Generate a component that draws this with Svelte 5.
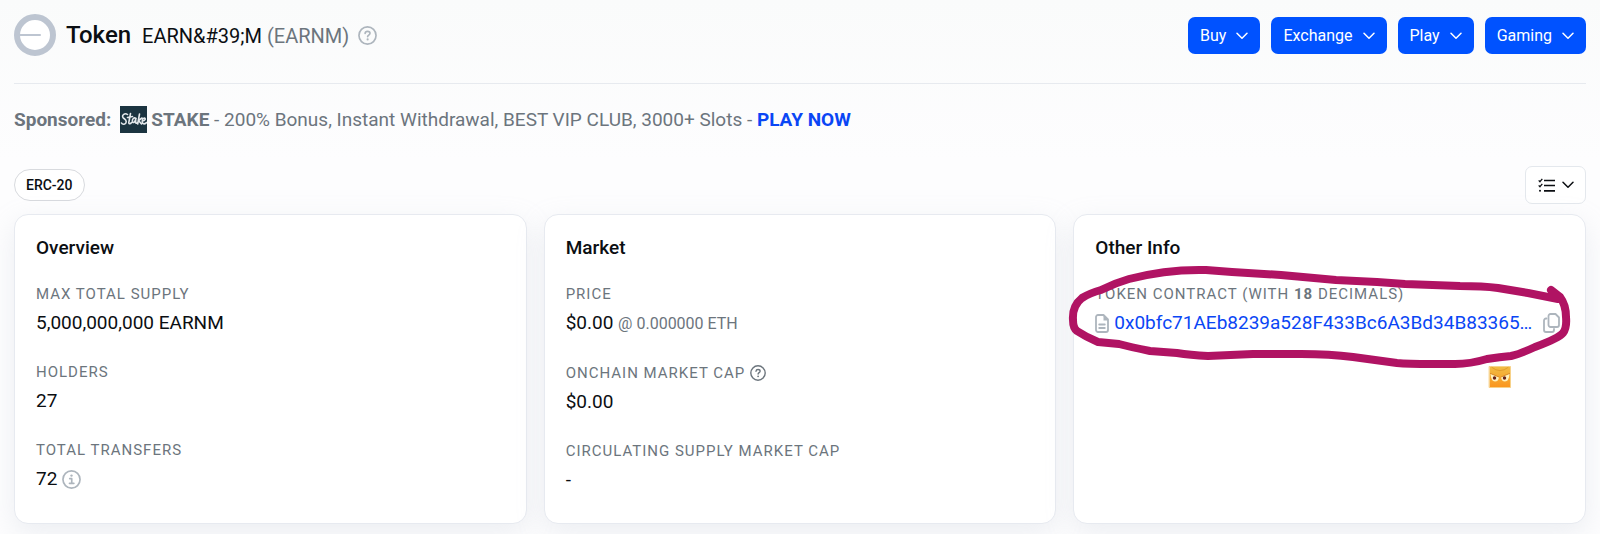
<script>
  const menus = ['Buy', 'Exchange', 'Play', 'Gaming'];
</script>

{#snippet chevron()}
  <svg class="chevron" viewBox="0 0 12 8" aria-hidden="true"><path d="M1 1.2 6 6.2 11 1.2" /></svg>
{/snippet}

{#snippet question()}
  <svg class="ring" viewBox="0 0 16 16" aria-hidden="true">
    <circle cx="8" cy="8" r="7.2" />
    <path d="M6 6.2c.1-1.1.9-1.7 2-1.7 1.2 0 2.1.7 2.1 1.7 0 1.4-2 1.5-2 2.8" />
    <circle class="dot" cx="8.1" cy="11.3" r=".9" />
  </svg>
{/snippet}

<main>
  <header>
    <svg class="logo" viewBox="0 0 42 42" aria-hidden="true">
      <circle cx="21" cy="21" r="18" />
      <path d="M5 21H26" />
    </svg>
    <h1>Token <span class="name">EARN&amp;#39;M <span class="muted">(EARNM)</span></span></h1>
    <span class="help">{@render question()}</span>
    <nav>
      {#each menus as menu}
        <button class="menu">{menu}{@render chevron()}</button>
      {/each}
    </nav>
  </header>

  <p class="sponsor">
    <b>Sponsored:</b>
    <svg class="stake" viewBox="0 0 27 27" aria-hidden="true">
      <rect width="27" height="27" />
      <path d="M7.500 8.500C5 6.500 1.500 9 3 11.500c1 1.500 3.500 1.800 3.200 4.500-.3 2.500-3.700 3-4.700 1M10.500 7.500 8.800 16.500c0 2 1.700 1.500 2.700 0M7.500 11.500l5-1M16 12.500c-2-1.500-4 .5-3.500 3 .5 2 2.500 1 3.300-2.500-.3 3-.3 5 1.200 4M19.500 8l-1.800 10M22 12l-3.500 2.500 3 3.500M22.500 15c2.500 0 3.500-2.500 2-3-2-.3-3 4-1.500 5.500 1 .8 2.500 0 3.500-1" />
    </svg>
    <span><b>STAKE</b> - 200% Bonus, Instant Withdrawal, BEST VIP CLUB, 3000+ Slots - <a href="#play"><b>PLAY NOW</b></a></span>
  </p>

  <div class="tools">
    <a class="pill" href="#erc20">ERC-20</a>
    <button class="list" aria-label="View options">
      <svg class="checks" viewBox="0 0 17 15" aria-hidden="true">
        <path d="M6 2.500h11M6 7.500h11M6 12.800h11" />
        <path class="thin" d="M.7 2.400 2 3.700 4.300.9M.7 7.400 2 8.700 4.300 5.900" />
        <circle cx="2" cy="12.800" r="1" />
      </svg>
      {@render chevron()}
    </button>
  </div>

  <div class="cards">
    <section>
      <h2>Overview</h2>
      <dl>
        <div><dt>MAX TOTAL SUPPLY</dt><dd>5,000,000,000 EARNM</dd></div>
        <div><dt>HOLDERS</dt><dd>27</dd></div>
        <div>
          <dt>TOTAL TRANSFERS</dt>
          <dd>
            72
            <svg class="ring info" viewBox="0 0 16 16" aria-hidden="true">
              <circle cx="8" cy="8" r="7.2" />
              <path d="M6.500 7.300H8.200V11.300M6.300 11.300H10" />
              <circle class="dot" cx="8" cy="4.700" r="1" />
            </svg>
          </dd>
        </div>
      </dl>
    </section>

    <section>
      <h2>Market</h2>
      <dl>
        <div><dt>PRICE</dt><dd><span>$0.00 <small>@ 0.000000 ETH</small></span></dd></div>
        <div><dt>ONCHAIN MARKET CAP {@render question()}</dt><dd>$0.00</dd></div>
        <div><dt>CIRCULATING SUPPLY MARKET CAP</dt><dd>-</dd></div>
      </dl>
    </section>

    <section>
      <h2>Other Info</h2>
      <dl>
        <div>
          <dt><span>TOKEN CONTRACT (WITH <b>18</b> DECIMALS)</span></dt>
          <dd class="contract">
            <svg class="file" viewBox="0 0 14 19" aria-hidden="true">
              <path d="M3 1H8.500L13 5.500V16a2 2 0 0 1-2 2H3a2 2 0 0 1-2-2V3a2 2 0 0 1 2-2Z" />
              <path class="fold" d="M8.500 1 13 5.500V6.500H8.500Z" />
              <path d="M4.200 10.500h5.600M4.200 14h5.600" />
            </svg>
            <a href="#contract">0x0bfc71AEb8239a528F433Bc6A3Bd34B83365…</a>
            <button class="copy" aria-label="Copy address">
              <svg viewBox="0 0 17 20" aria-hidden="true">
                <path d="M7.500 1H12.500L16 4.500V12a2 2 0 0 1-2 2H7.500a2 2 0 0 1-2-2V3a2 2 0 0 1 2-2Z" />
                <path d="M3.500 5.500H3a2 2 0 0 0-2 2V17a2 2 0 0 0 2 2H9a2 2 0 0 0 2-2V16" />
              </svg>
            </button>
          </dd>
        </div>
      </dl>
      <svg class="scribble" viewBox="1066 262 510 130" aria-hidden="true">
        <defs>
          <linearGradient id="face" x1="0" y1="0" x2="0" y2="1">
            <stop offset="0" stop-color="#f0bd45" />
            <stop offset="1" stop-color="#fb951e" />
          </linearGradient>
        </defs>
        <path class="loop" d="M1551 290 1560 297Q1566 305 1566 317 1567 328 1563 333 1559 338 1535 347 1520 354 1511 356 1500 357 1487 359 1470 364 1455 364L1432 364Q1407 364 1397 363L1353 357Q1330 354 1301 354L1253 354 1208 356Q1190 355 1177 353L1150 351Q1130 347 1119 344L1098 342Q1086 337 1077 331 1073 328 1073 320 1072 306 1082 298 1090 293 1101 290 1115 283 1129 279 1167 269 1206 270L1232 272 1281 275 1336 280 1377 282 1405 284 1460 286Q1483 286 1498 288L1528 293 1558 299" />
        <g transform="translate(1489 366)">
          <rect x=".5" y=".5" width="21" height="21" fill="url(#face)" stroke="#f7d28a" />
          <path d="M3 1.500Q11 8 19 1.500" fill="none" stroke="#e29d2d" />
          <path d="M1.500 7.500 10 11Q9.500 15.500 6 15.500 2 15.500 1.500 7.500ZM20.500 7.500 12 11Q12.500 15.500 16 15.500 20 15.500 20.500 7.500Z" fill="#fff0ba" stroke="none" />
          <path d="M1.500 7.500 10 11M20.500 7.500 12 11" stroke="#d98a26" />
          <circle cx="5.500" cy="12" r="1.700" fill="#66231b" stroke="none" />
          <circle cx="15.500" cy="12" r="1.700" fill="#66231b" stroke="none" />
        </g>
      </svg>
    </section>
  </div>
</main>

<style>
  :global(body) {
    margin: 0;
    background: #fcfcfd;
  }
  main {
    padding: 14px 14px 11px;
    font: 19px/24px Roboto, sans-serif;
    color: #0b0e12;
    background: linear-gradient(#fafbfb, #fdfdfe 160px);
  }
  h1, h2, p, dl, dd {
    margin: 0;
  }
  svg {
    flex: none;
    fill: none;
    stroke: currentColor;
    stroke-linecap: round;
    stroke-linejoin: round;
  }
  button {
    font: inherit;
    cursor: pointer;
  }
  a {
    color: #0a46f5;
    text-decoration: none;
  }
  b {
    font-weight: 700;
  }
  header {
    display: flex;
    align-items: center;
    padding-bottom: 27px;
    border-bottom: 1px solid #e7eaef;
  }
  .logo {
    width: 42px;
    height: 42px;
    color: #bdc5d1;
    fill: #fff;
    stroke-width: 6;
  }
  .logo path {
    stroke-width: 2;
  }
  h1 {
    margin-left: 10px;
    font-size: 24px;
    font-weight: 500;
    line-height: 28px;
  }
  .name {
    margin-left: 5px;
    font-size: 20px;
    font-weight: 400;
  }
  .muted, small {
    color: #6c757d;
  }
  .ring {
    width: 16px;
    height: 16px;
    stroke-width: 1.4;
  }
  .dot {
    fill: currentColor;
    stroke: none;
  }
  .help {
    display: flex;
    margin-left: 9px;
    color: #adb5bd;
  }
  .help .ring, .info {
    width: 19px;
    height: 19px;
  }
  nav {
    display: flex;
    gap: 11px;
    margin-left: auto;
  }
  .menu {
    display: flex;
    align-items: center;
    gap: 10px;
    height: 37px;
    padding: 1px 12px 0;
    border: 0;
    border-radius: 7px;
    color: #fff;
    background: #0052ff;
    font-size: 16px;
  }
  .chevron {
    width: 12px;
    height: 8px;
    stroke-width: 1.5;
  }
  .sponsor {
    display: flex;
    align-items: center;
    margin-top: 22px;
    color: #6c757d;
    line-height: 27px;
  }
  .stake {
    width: 27px;
    height: 27px;
    margin: 0 4px 0 9px;
    color: #e3e8eb;
    stroke-width: 1.6;
  }
  .stake rect {
    fill: #1b3440;
    stroke: none;
  }
  .tools {
    display: flex;
    align-items: center;
    justify-content: space-between;
    margin: 33px 0 10px;
  }
  .pill {
    padding: 3px 11px;
    border: 1px solid #d8dade;
    border-radius: 16px;
    background: #fff;
    color: #0b0e12;
    font-size: 14px;
    font-weight: 500;
  }
  .list {
    display: flex;
    align-items: center;
    gap: 7px;
    height: 38px;
    padding: 0 11px 0 12px;
    border: 1px solid #e4e8ed;
    border-radius: 7px;
    background: #fff;
    color: #0b0e12;
  }
  .checks {
    width: 17px;
    height: 15px;
    stroke-width: 1.7;
    stroke-linecap: butt;
  }
  .checks .thin {
    stroke-width: 1.3;
  }
  .checks circle {
    fill: currentColor;
    stroke: none;
  }
  .cards {
    display: grid;
    grid-template-columns: repeat(3, minmax(0, 1fr));
    gap: 17px;
  }
  section {
    position: relative;
    padding: 21px;
    border: 1px solid #e7eaf0;
    border-radius: 14px;
    background: #fff;
    box-shadow: 0 9px 27px rgba(189, 197, 209, 0.25);
  }
  h2 {
    font-size: 19px;
    font-weight: 500;
    line-height: 24px;
  }
  dl {
    display: grid;
    gap: 22px;
    padding: 21px 0 8px;
  }
  dt {
    display: flex;
    align-items: center;
    gap: 5px;
    margin-bottom: 2px;
    color: #6c757d;
    font-size: 15px;
    line-height: 26px;
    letter-spacing: 1px;
  }
  dd {
    display: flex;
    align-items: center;
    gap: 5px;
    line-height: 28px;
  }
  small {
    font-size: 16px;
  }
  .info {
    color: #adb5bd;
  }
  .file {
    width: 14px;
    height: 19px;
    color: #adb5bd;
    stroke-width: 1.8;
  }
  .file .fold {
    fill: currentColor;
    stroke: none;
  }
  .contract a {
    min-width: 0;
    overflow-wrap: anywhere;
  }
  .copy {
    display: flex;
    margin-left: 6px;
    padding: 0;
    border: 0;
    background: none;
    color: #adb5bd;
  }
  .copy svg {
    width: 17px;
    height: 20px;
    stroke-width: 1.8;
  }
  .scribble {
    position: absolute;
    top: 47px;
    left: -8px;
    width: 510px;
    height: 130px;
    pointer-events: none;
  }
  .loop {
    stroke: #b01363;
    stroke-width: 8;
  }
</style>
